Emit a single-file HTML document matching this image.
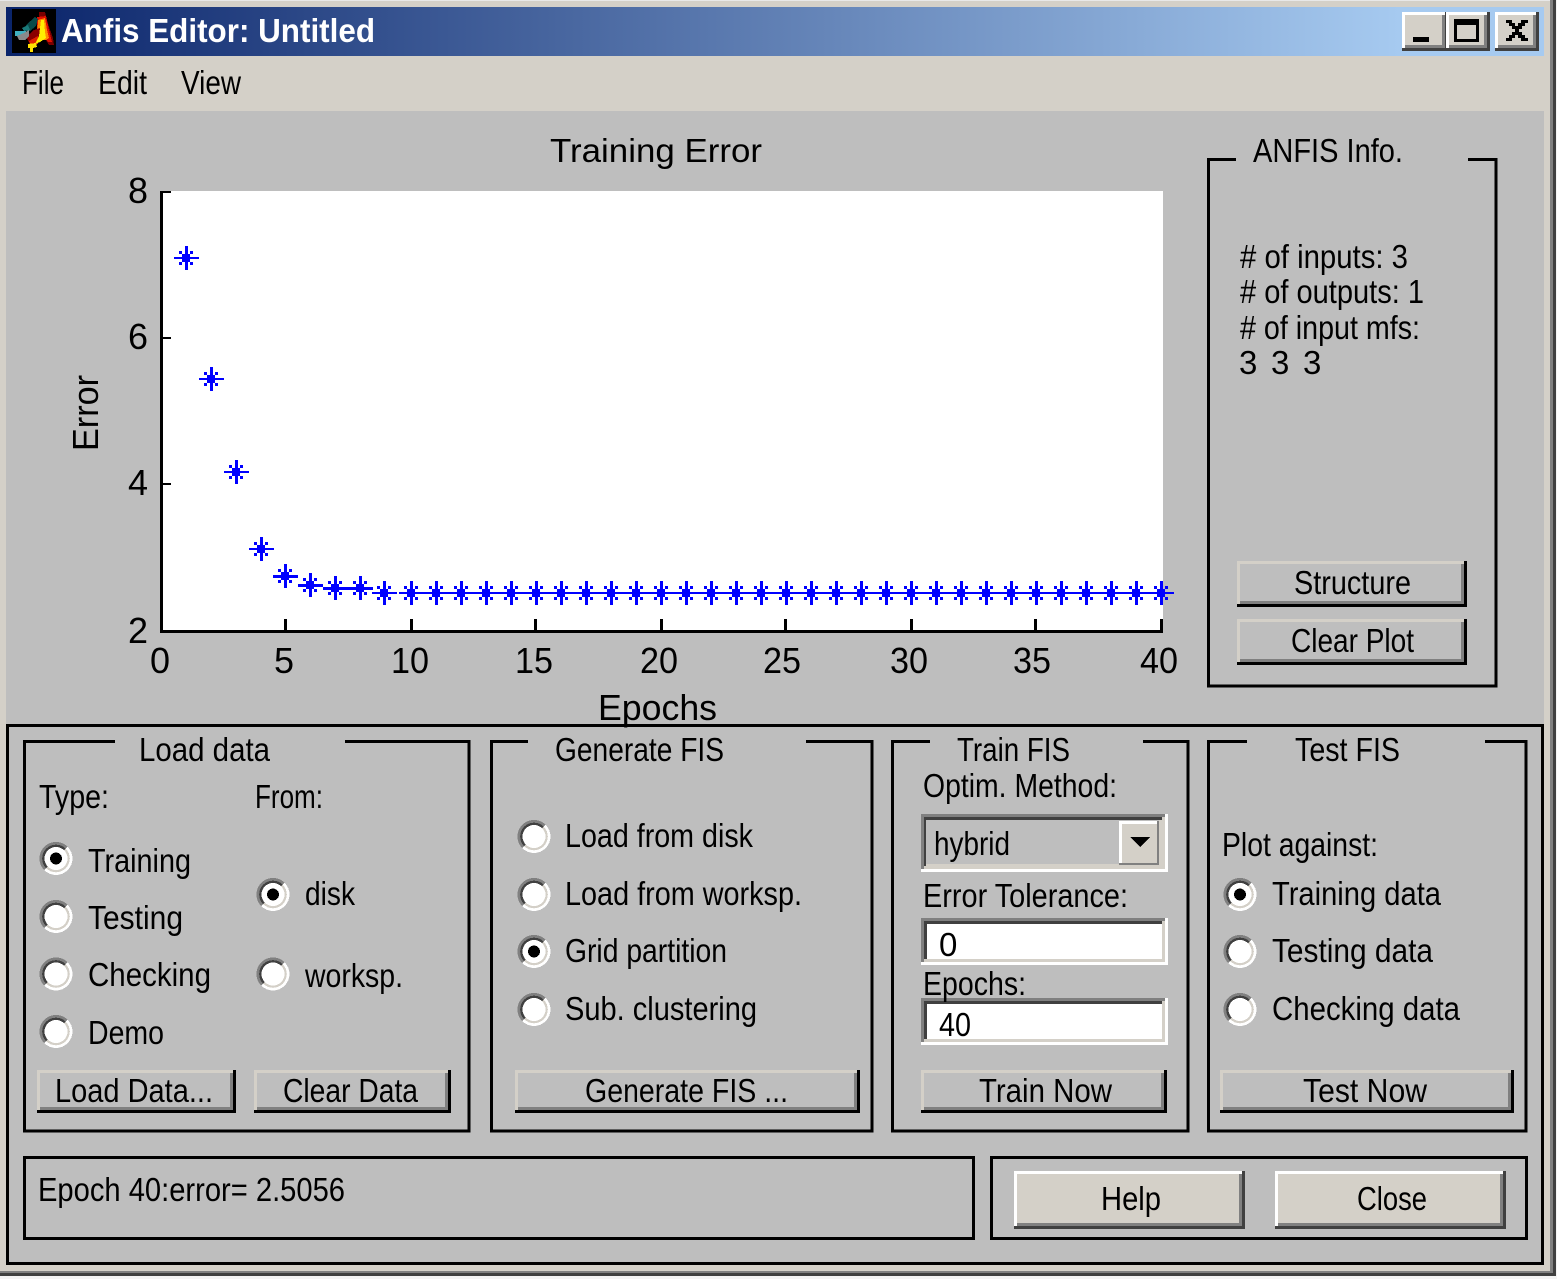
<!DOCTYPE html>
<html><head><meta charset="utf-8"><title>Anfis Editor: Untitled</title>
<style>
html,body{margin:0;padding:0;background:#d4d0c8;width:1557px;height:1279px;overflow:hidden}
svg{display:block}
text{font-family:"Liberation Sans",sans-serif;font-size:33px;fill:#000}
.n{font-size:36px}
</style></head><body>
<svg width="1557" height="1279" viewBox="0 0 1557 1279" xmlns="http://www.w3.org/2000/svg">
<defs>
<linearGradient id="tb" x1="0" x2="1" y1="0" y2="0"><stop offset="0" stop-color="#0a246a"/><stop offset="0.907" stop-color="#a6caf0"/><stop offset="1" stop-color="#a6caf0"/></linearGradient>
<g id="m" shape-rendering="crispEdges" fill="#0000ff">
<rect x="-12" y="-1" width="25" height="2"/><rect x="-1" y="-12" width="3" height="24"/><rect x="-4" y="-4" width="8" height="8"/>
<rect x="-7" y="-7" width="3" height="3"/><rect x="4" y="-7" width="3" height="3"/><rect x="-7" y="4" width="3" height="3"/><rect x="4" y="4" width="3" height="3"/>
</g>
<g id="r" shape-rendering="crispEdges">
<circle r="16.5" fill="#fff"/>
<path d="M-11.700 11.700A16.500 16.500 0 0 1 11.700 -11.700Z" fill="#808080"/>
<circle r="13.800" fill="#d4d0c8"/>
<path d="M-9.800 9.800A13.800 13.800 0 0 1 9.800 -9.800Z" fill="#404040"/>
<circle r="11.500" fill="#fff"/>
</g>
</defs>
<rect width="1557" height="1279" fill="#d4d0c8"/>
<g shape-rendering="crispEdges">
<rect x="0" y="0" width="1557" height="1" fill="#e8e8e8"/>
<rect x="1550" y="0" width="3" height="1273" fill="#808080"/>
<rect x="1553" y="0" width="3" height="1276" fill="#404040"/>
<rect x="1556" y="0" width="1" height="1279" fill="#f4f4f4"/>
<rect x="0" y="1271" width="1553" height="2" fill="#808080"/>
<rect x="0" y="1273" width="1556" height="3" fill="#404040"/>
<rect x="0" y="1276" width="1557" height="3" fill="#f4f4f4"/>
<rect x="6" y="7" width="1538" height="49" fill="url(#tb)"/>
<rect x="6" y="111" width="1538" height="1153" fill="#bebebe"/>
<!-- logo -->
<rect x="12" y="9" width="44" height="44" fill="#000"/>
<polygon points="39,12 45,12 48,24 53,38 54,45 49,45 40,30" fill="#7a0000"/>
<polygon points="37,17 46,16 49,30 52,42 48,42 44,36 37,36" fill="#e01000"/>
<polygon points="38,20 45,18 47,30 49,38 46,40 37,40" fill="#ff8c00"/>
<polygon points="26,37 34,30 40,28 40,38 36,46 30,44" fill="#8a0000"/>
<polygon points="29,41 38,36 38,44 30,45" fill="#e02000"/>
<polygon points="41,20 44,20 45,32 46,38 40,42 35,44 39,36" fill="#ffee00"/>
<polygon points="28,44 36,43 37,47 33,48 33,52 30,52 30,48 28,48" fill="#ffe000"/>
<polygon points="26,25 35,17 38,19 36,26 30,31 26,31" fill="#0a4a4a"/>
<polygon points="22,28 28,25 30,30 24,31" fill="#1a7a7a"/>
<rect x="15" y="31" width="11" height="5" fill="#40b0c0"/>
<polygon points="17,36 24,33 29,30 29,36 25,40 19,40" fill="#8a8a8a"/>
<!-- window buttons -->
<rect x="1402" y="12" width="46" height="39" fill="#404040"/><rect x="1402" y="12" width="43" height="36" fill="#fff"/><rect x="1405" y="15" width="40" height="33" fill="#808080"/><rect x="1405" y="15" width="37" height="30" fill="#d4d0c8"/>
<rect x="1413" y="37" width="16" height="5" fill="#000"/>
<rect x="1446" y="12" width="44" height="39" fill="#404040"/><rect x="1446" y="12" width="41" height="36" fill="#fff"/><rect x="1449" y="15" width="38" height="33" fill="#808080"/><rect x="1449" y="15" width="35" height="30" fill="#d4d0c8"/>
<path d="M1454 19h25v23h-25z M1457 25v14h19v-14z" fill="#000" fill-rule="evenodd"/>
<rect x="1495" y="12" width="44" height="39" fill="#404040"/><rect x="1495" y="12" width="41" height="36" fill="#fff"/><rect x="1498" y="15" width="38" height="33" fill="#808080"/><rect x="1498" y="15" width="35" height="30" fill="#d4d0c8"/>
<path d="M1506 20h6v3h3v3h3v-3h3v-3h7v3h-3v3h-3v3h-3v3h3v3h3v3h3v3h-7v-3h-3v-3h-3v3h-3v3h-6v-3h3v-3h3v-3h3v-3h-3v-3h-3v-3h-3z" fill="#000"/>
<!-- plot -->
<rect x="160" y="191" width="1003" height="441" fill="#fff"/>
<rect x="160" y="191" width="3" height="441" fill="#000"/>
<rect x="160" y="630" width="1003" height="3" fill="#000"/>
<rect x="160" y="191" width="11" height="2" fill="#000"/><rect x="160" y="337" width="11" height="2" fill="#000"/><rect x="160" y="483" width="11" height="2" fill="#000"/>
<rect x="284" y="619" width="3" height="12" fill="#000"/><rect x="410" y="619" width="3" height="12" fill="#000"/><rect x="534" y="619" width="3" height="12" fill="#000"/><rect x="660" y="619" width="3" height="12" fill="#000"/><rect x="784" y="619" width="3" height="12" fill="#000"/><rect x="910" y="619" width="3" height="12" fill="#000"/><rect x="1034" y="619" width="3" height="12" fill="#000"/><rect x="1160" y="619" width="3" height="12" fill="#000"/>
</g>
<use href="#m" x="186" y="258"/><use href="#m" x="211" y="379"/><use href="#m" x="236" y="472"/><use href="#m" x="261" y="549"/><use href="#m" x="285" y="576"/><use href="#m" x="310" y="585"/><use href="#m" x="335" y="588"/><use href="#m" x="360" y="588"/>
<use href="#m" x="384" y="593"/><use href="#m" x="411" y="593"/><use href="#m" x="436" y="593"/><use href="#m" x="461" y="593"/><use href="#m" x="486" y="593"/><use href="#m" x="511" y="593"/><use href="#m" x="536" y="593"/><use href="#m" x="561" y="593"/><use href="#m" x="586" y="593"/><use href="#m" x="611" y="593"/><use href="#m" x="636" y="593"/><use href="#m" x="661" y="593"/><use href="#m" x="686" y="593"/><use href="#m" x="711" y="593"/><use href="#m" x="736" y="593"/><use href="#m" x="761" y="593"/><use href="#m" x="786" y="593"/><use href="#m" x="811" y="593"/><use href="#m" x="836" y="593"/><use href="#m" x="861" y="593"/><use href="#m" x="886" y="593"/><use href="#m" x="911" y="593"/><use href="#m" x="936" y="593"/><use href="#m" x="961" y="593"/><use href="#m" x="986" y="593"/><use href="#m" x="1011" y="593"/><use href="#m" x="1036" y="593"/><use href="#m" x="1061" y="593"/><use href="#m" x="1086" y="593"/><use href="#m" x="1111" y="593"/><use href="#m" x="1136" y="593"/><use href="#m" x="1161" y="593"/>
<g shape-rendering="crispEdges" fill="#0000ff"><rect x="273" y="575" width="25" height="3"/><rect x="298" y="584" width="25" height="3"/><rect x="323" y="587" width="50" height="3"/></g>
<!-- frames -->
<g fill="none" stroke="#000" stroke-width="3" shape-rendering="crispEdges">
<path d="M1236 159.500H1208.500V686H1496V159.500H1468"/>
<rect x="7.500" y="725.500" width="1535" height="538"/>
<path d="M115 741.500H24.500V1131H469V741.500H345"/>
<path d="M528 741.500H491.500V1131H872V741.500H806"/>
<path d="M930 741.500H892.500V1131H1188V741.500H1143"/>
<path d="M1247 741.500H1208.500V1131H1526V741.500H1485"/>
<rect x="24.500" y="1157.500" width="949" height="81"/>
<rect x="991.500" y="1157.500" width="535" height="81"/>
</g>
<!-- flat buttons -->
<g shape-rendering="crispEdges">
<rect x="37" y="1070" width="199" height="43" fill="#000"/><rect x="37" y="1070" width="196" height="40" fill="#d4d0c8"/><rect x="40" y="1073" width="193" height="37" fill="#808080"/><rect x="40" y="1073" width="190" height="34" fill="#bebebe"/>
<rect x="254" y="1070" width="197" height="43" fill="#000"/><rect x="254" y="1070" width="194" height="40" fill="#d4d0c8"/><rect x="257" y="1073" width="191" height="37" fill="#808080"/><rect x="257" y="1073" width="188" height="34" fill="#bebebe"/>
<rect x="515" y="1070" width="345" height="43" fill="#000"/><rect x="515" y="1070" width="342" height="40" fill="#d4d0c8"/><rect x="518" y="1073" width="339" height="37" fill="#808080"/><rect x="518" y="1073" width="336" height="34" fill="#bebebe"/>
<rect x="921" y="1070" width="246" height="43" fill="#000"/><rect x="921" y="1070" width="243" height="40" fill="#d4d0c8"/><rect x="924" y="1073" width="240" height="37" fill="#808080"/><rect x="924" y="1073" width="237" height="34" fill="#bebebe"/>
<rect x="1220" y="1070" width="294" height="43" fill="#000"/><rect x="1220" y="1070" width="291" height="40" fill="#d4d0c8"/><rect x="1223" y="1073" width="288" height="37" fill="#808080"/><rect x="1223" y="1073" width="285" height="34" fill="#bebebe"/>
<rect x="1237" y="561" width="230" height="46" fill="#000"/><rect x="1237" y="561" width="227" height="43" fill="#d4d0c8"/><rect x="1240" y="564" width="224" height="40" fill="#808080"/><rect x="1240" y="564" width="221" height="37" fill="#bebebe"/>
<rect x="1237" y="619" width="230" height="46" fill="#000"/><rect x="1237" y="619" width="227" height="43" fill="#d4d0c8"/><rect x="1240" y="622" width="224" height="40" fill="#808080"/><rect x="1240" y="622" width="221" height="37" fill="#bebebe"/>
<!-- help / close -->
<rect x="1014" y="1171" width="231" height="58" fill="#404040"/><rect x="1014" y="1171" width="228" height="55" fill="#fff"/><rect x="1017" y="1174" width="225" height="52" fill="#808080"/><rect x="1017" y="1174" width="222" height="49" fill="#d4d0c8"/>
<rect x="1275" y="1171" width="231" height="58" fill="#404040"/><rect x="1275" y="1171" width="228" height="55" fill="#fff"/><rect x="1278" y="1174" width="225" height="52" fill="#808080"/><rect x="1278" y="1174" width="222" height="49" fill="#d4d0c8"/>
<!-- popup -->
<rect x="921" y="814" width="247" height="58" fill="#fff"/><rect x="921" y="814" width="244" height="55" fill="#808080"/><rect x="924" y="817" width="241" height="52" fill="#d4d0c8"/><rect x="924" y="817" width="238" height="49" fill="#404040"/><rect x="926" y="820" width="236" height="46" fill="#d4d0c8"/><rect x="926" y="820" width="233" height="44" fill="#bebebe"/>
<rect x="1119" y="821" width="40" height="44" fill="#808080"/><rect x="1119" y="821" width="38" height="42" fill="#fff"/><rect x="1122" y="824" width="35" height="39" fill="#d4d0c8"/>
<path d="M1130 837h20l-10 10z" fill="#000"/>
<!-- edits -->
<rect x="921" y="918" width="247" height="47" fill="#fff"/><rect x="921" y="918" width="244" height="44" fill="#808080"/><rect x="924" y="921" width="241" height="41" fill="#d4d0c8"/><rect x="924" y="921" width="238" height="38" fill="#404040"/><rect x="927" y="924" width="235" height="35" fill="#fff"/>
<rect x="921" y="998" width="247" height="47" fill="#fff"/><rect x="921" y="998" width="244" height="44" fill="#808080"/><rect x="924" y="1001" width="241" height="41" fill="#d4d0c8"/><rect x="924" y="1001" width="238" height="38" fill="#404040"/><rect x="927" y="1004" width="235" height="35" fill="#fff"/>
</g>
<!-- radios -->
<use href="#r" x="56" y="858.500"/><use href="#r" x="56" y="916.500"/><use href="#r" x="56" y="974"/><use href="#r" x="56" y="1031.500"/>
<use href="#r" x="273" y="894.500"/><use href="#r" x="273" y="974"/>
<use href="#r" x="534" y="836.500"/><use href="#r" x="534" y="894.500"/><use href="#r" x="534" y="951.500"/><use href="#r" x="534" y="1009.500"/>
<use href="#r" x="1240" y="894.500"/><use href="#r" x="1240" y="951.500"/><use href="#r" x="1240" y="1009.500"/>
<g fill="#000" shape-rendering="crispEdges"><circle cx="56" cy="858.500" r="6"/><circle cx="273" cy="894.500" r="6"/><circle cx="534" cy="951.500" r="6"/><circle cx="1240" cy="894.500" r="6"/></g>
<!-- text -->
<text x="61" y="42" textLength="314" lengthAdjust="spacingAndGlyphs" style="fill:#fff;font-weight:bold">Anfis Editor: Untitled</text>
<text x="22" y="94" textLength="42" lengthAdjust="spacingAndGlyphs">File</text>
<text x="98" y="94" textLength="49" lengthAdjust="spacingAndGlyphs">Edit</text>
<text x="181" y="94" textLength="60" lengthAdjust="spacingAndGlyphs">View</text>
<text x="550" y="162" textLength="212" lengthAdjust="spacingAndGlyphs">Training Error</text>
<text class="n" x="128" y="203">8</text><text class="n" x="128" y="349">6</text><text class="n" x="128" y="495">4</text><text class="n" x="128" y="643">2</text>
<text class="n" x="150" y="673">0</text><text class="n" x="274" y="673">5</text>
<text class="n" x="391" y="673" textLength="38" lengthAdjust="spacingAndGlyphs">10</text><text class="n" x="515" y="673" textLength="38" lengthAdjust="spacingAndGlyphs">15</text><text class="n" x="640" y="673" textLength="38" lengthAdjust="spacingAndGlyphs">20</text><text class="n" x="763" y="673" textLength="38" lengthAdjust="spacingAndGlyphs">25</text><text class="n" x="890" y="673" textLength="38" lengthAdjust="spacingAndGlyphs">30</text><text class="n" x="1013" y="673" textLength="38" lengthAdjust="spacingAndGlyphs">35</text><text class="n" x="1140" y="673" textLength="38" lengthAdjust="spacingAndGlyphs">40</text>
<text x="598" y="720" textLength="119" lengthAdjust="spacingAndGlyphs" class="n">Epochs</text>
<text transform="translate(98,451) rotate(-90)" class="n" textLength="76" lengthAdjust="spacingAndGlyphs">Error</text>
<text x="1253" y="162" textLength="150" lengthAdjust="spacingAndGlyphs">ANFIS Info.</text>
<text x="1240" y="268" textLength="168" lengthAdjust="spacingAndGlyphs"># of inputs: 3</text>
<text x="1240" y="303" textLength="184" lengthAdjust="spacingAndGlyphs"># of outputs: 1</text>
<text x="1240" y="339" textLength="180" lengthAdjust="spacingAndGlyphs"># of input mfs:</text>
<text x="1239" y="374">3</text><text x="1271" y="374">3</text><text x="1303" y="374">3</text>
<text x="1294" y="594" textLength="117" lengthAdjust="spacingAndGlyphs">Structure</text>
<text x="1291" y="652" textLength="123" lengthAdjust="spacingAndGlyphs">Clear Plot</text>
<text x="139" y="761" textLength="131" lengthAdjust="spacingAndGlyphs">Load data</text>
<text x="39" y="808" textLength="70" lengthAdjust="spacingAndGlyphs">Type:</text>
<text x="255" y="808" textLength="68" lengthAdjust="spacingAndGlyphs">From:</text>
<text x="88" y="872" textLength="103" lengthAdjust="spacingAndGlyphs">Training</text>
<text x="88" y="929" textLength="95" lengthAdjust="spacingAndGlyphs">Testing</text>
<text x="88" y="986" textLength="123" lengthAdjust="spacingAndGlyphs">Checking</text>
<text x="88" y="1044" textLength="76" lengthAdjust="spacingAndGlyphs">Demo</text>
<text x="305" y="905" textLength="50" lengthAdjust="spacingAndGlyphs">disk</text>
<text x="305" y="987" textLength="98" lengthAdjust="spacingAndGlyphs">worksp.</text>
<text x="55" y="1102" textLength="158" lengthAdjust="spacingAndGlyphs">Load Data...</text>
<text x="283" y="1102" textLength="135" lengthAdjust="spacingAndGlyphs">Clear Data</text>
<text x="555" y="761" textLength="169" lengthAdjust="spacingAndGlyphs">Generate FIS</text>
<text x="565" y="847" textLength="188" lengthAdjust="spacingAndGlyphs">Load from disk</text>
<text x="565" y="905" textLength="237" lengthAdjust="spacingAndGlyphs">Load from worksp.</text>
<text x="565" y="962" textLength="162" lengthAdjust="spacingAndGlyphs">Grid partition</text>
<text x="565" y="1020" textLength="192" lengthAdjust="spacingAndGlyphs">Sub. clustering</text>
<text x="585" y="1102" textLength="203" lengthAdjust="spacingAndGlyphs">Generate FIS ...</text>
<text x="957" y="761" textLength="113" lengthAdjust="spacingAndGlyphs">Train FIS</text>
<text x="923" y="797" textLength="194" lengthAdjust="spacingAndGlyphs">Optim. Method:</text>
<text x="934" y="855" textLength="76" lengthAdjust="spacingAndGlyphs">hybrid</text>
<text x="923" y="907" textLength="205" lengthAdjust="spacingAndGlyphs">Error Tolerance:</text>
<text x="939" y="956">0</text>
<text x="923" y="995" textLength="103" lengthAdjust="spacingAndGlyphs">Epochs:</text>
<text x="939" y="1036" textLength="32" lengthAdjust="spacingAndGlyphs">40</text>
<text x="979" y="1102" textLength="133" lengthAdjust="spacingAndGlyphs">Train Now</text>
<text x="1295" y="761" textLength="105" lengthAdjust="spacingAndGlyphs">Test FIS</text>
<text x="1222" y="856" textLength="156" lengthAdjust="spacingAndGlyphs">Plot against:</text>
<text x="1272" y="905" textLength="169" lengthAdjust="spacingAndGlyphs">Training data</text>
<text x="1272" y="962" textLength="161" lengthAdjust="spacingAndGlyphs">Testing data</text>
<text x="1272" y="1020" textLength="188" lengthAdjust="spacingAndGlyphs">Checking data</text>
<text x="1303" y="1102" textLength="124" lengthAdjust="spacingAndGlyphs">Test Now</text>
<text x="38" y="1201" textLength="307" lengthAdjust="spacingAndGlyphs">Epoch 40:error= 2.5056</text>
<text x="1101" y="1210" textLength="60" lengthAdjust="spacingAndGlyphs">Help</text>
<text x="1357" y="1210" textLength="70" lengthAdjust="spacingAndGlyphs">Close</text>
</svg>
</body></html>
